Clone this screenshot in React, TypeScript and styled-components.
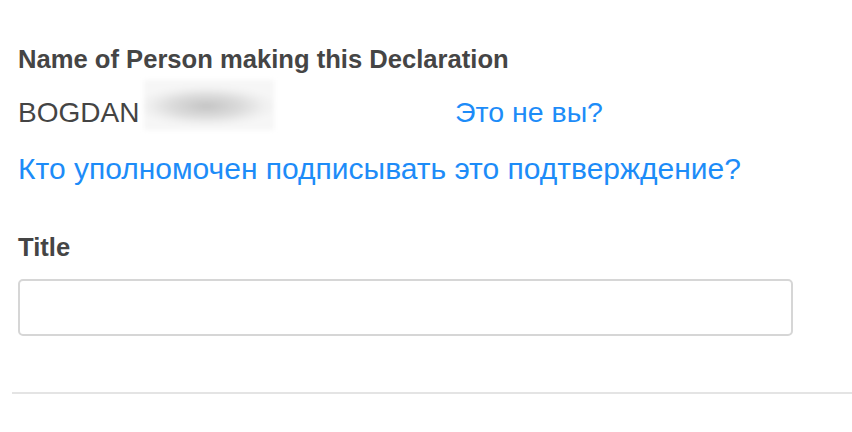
import React from "react";
import styled, { createGlobalStyle } from "styled-components";

const Global = createGlobalStyle`
  html, body { margin: 0; padding: 0; background: #fff; }
  body { font-family: "Liberation Sans", Arial, sans-serif; }
`;

const Page = styled.div`
  width: 852px;
  height: 432px;
  overflow: hidden;
  display: flex;
  flex-direction: column;
  padding-top: 44px;
  box-sizing: border-box;
`;

const Section = styled.div`
  padding: 0 18px;
  display: flex;
  flex-direction: column;
  align-items: flex-start;
`;

const Label = styled.div`
  font-size: 25.6px;
  line-height: 30px;
  font-weight: 700;
  color: #454545;
`;

const NameRow = styled.div`
  display: flex;
  align-items: baseline;
  margin-top: 6px;
`;

const NameText = styled.span`
  font-size: 28px;
  line-height: 32px;
  color: #444;
  margin-top: 17px;
  width: 126px;
`;

const Blur = styled.div`
  align-self: flex-start;
  width: 130px;
  height: 50px;
  background: radial-gradient(ellipse 55% 42% at 48% 52%, #c4c4c4 0%, #dcdcdc 50%, #efefef 80%, #f6f6f6 100%);
  filter: blur(2px);
  margin-right: 181px;
`;

const Link = styled.a`
  font-size: 28.5px;
  line-height: 34px;
  color: #1d8cf8;
  text-decoration: none;
  cursor: pointer;
`;

const HelpLink = styled(Link)`
  display: block;
  margin-top: 22px;
  font-size: 30px;
`;

const TitleLabel = styled(Label)`
  margin-top: 46px;
`;

const Input = styled.input`
  margin-top: 17px;
  width: 775px;
  height: 57px;
  box-sizing: border-box;
  border: 2px solid #d6d6d6;
  border-radius: 5px;
  outline: none;
  font-size: 22px;
  padding: 0 12px;
  font-family: inherit;
  background: #fff;
`;

const Divider = styled.hr`
  margin: 56px 0 0 12px;
  border: none;
  height: 2px;
  background: #e4e4e4;
`;

export default function App() {
  return (
    <>
      <Global />
      <Page>
        <Section>
          <Label>Name of Person making this Declaration</Label>
          <NameRow>
            <NameText>BOGDAN</NameText>
            <Blur />
            <Link>Это не вы?</Link>
          </NameRow>
          <HelpLink>Кто уполномочен подписывать это подтверждение?</HelpLink>
          <TitleLabel>Title</TitleLabel>
          <Input type="text" />
        </Section>
        <Divider />
      </Page>
    </>
  );
}
